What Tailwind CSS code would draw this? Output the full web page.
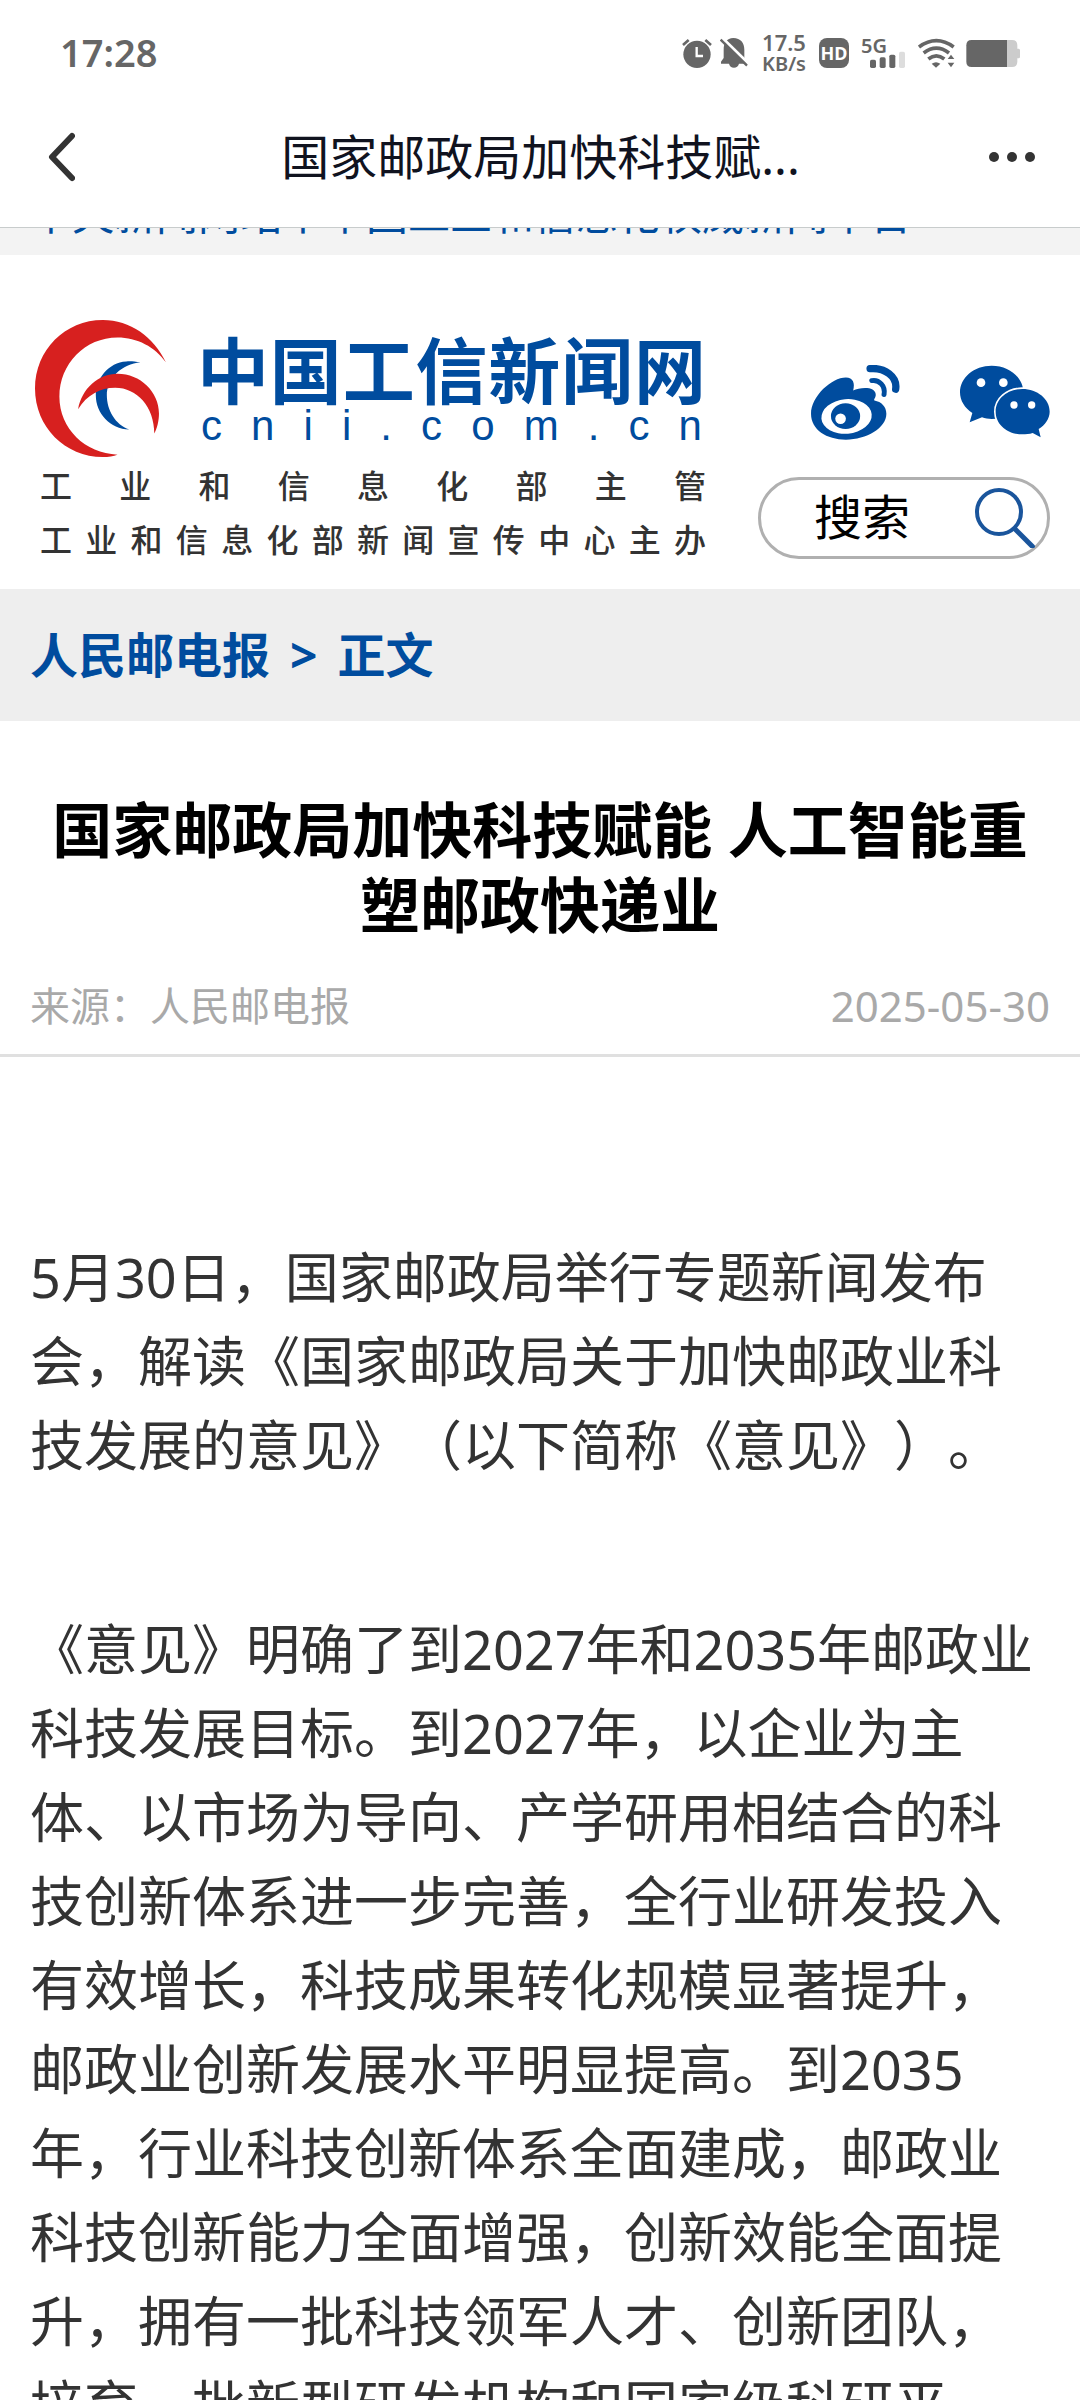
<!DOCTYPE html>
<html lang="zh-CN">
<head>
    <meta charset="UTF-8">
    <meta name="viewport" content="width=device-width, initial-scale=1.0">
    <title>国家邮政局加快科技赋能 人工智能重塑邮政快递业</title>
    <script src="https://cdn.jsdelivr.net/npm/@tailwindcss/browser@4"></script>
</head>
<body class="h-screen overflow-hidden flex flex-col bg-white font-['Noto_Sans','Noto_Sans_CJK_SC',sans-serif] [text-spacing-trim:space-all]">

<!-- Status Bar -->
<div class="shrink-0 flex items-center justify-between h-[104px] pl-[60px] pr-[60px] text-[#666]">
    <span class="text-[38px] leading-[40px] font-semibold">17:28</span>
    <div class="flex items-center pt-[2px]">
        <!-- alarm -->
        <svg class="w-[30px] h-[30px]" viewBox="63 57 90 90" fill="#666">
            <circle cx="108" cy="106" r="41"/>
            <path d="M66 78L83 63M150 78L133 63" stroke="#666" stroke-width="8"/>
            <path d="M107 84V111H126" fill="none" stroke="#fff" stroke-width="7"/>
        </svg>
        <!-- muted bell -->
        <svg class="w-[28px] h-[30px] ml-2" viewBox="179 57 84 90" fill="#666">
            <path d="M219 57C241 57 252 72 252 92V117L259 128V134H236C234 142 228 146 221 146C213 146 208 142 206 134H182V128L190 117V92C190 72 199 57 219 57Z"/>
            <path d="M186 57L266 135" stroke="#fff" stroke-width="9"/>
            <path d="M181 62L260 140" stroke="#666" stroke-width="7"/>
        </svg>
        <div class="ml-[13px] w-[46px] text-center font-semibold">
            <div class="text-[22px] leading-[22px]">17.5</div>
            <div class="text-[20px] leading-[22px]">KB/s</div>
        </div>
        <span class="ml-3 w-[30px] h-[30px] rounded-lg bg-[#666] text-white text-[18px] leading-[30px] font-bold text-center">HD</span>
        <!-- mobile signal -->
        <div class="relative ml-3 w-[44px] h-[30px]">
            <span class="absolute left-0 top-0 text-[20px] leading-[15px] font-semibold">5G</span>
            <svg class="w-[44px] h-[30px]" viewBox="603 57 132 90" fill="#666">
                <rect x="630" y="122" width="18" height="25" rx="5"/>
                <rect x="659" y="115" width="18" height="32" rx="5"/>
                <rect x="688" y="107" width="18" height="40" rx="5"/>
                <rect x="717" y="98" width="18" height="49" rx="5" fill="#ddd"/>
            </svg>
        </div>
        <!-- wifi -->
        <svg class="w-[37px] h-[30px] ml-[13px]" viewBox="774 57 111 90" fill="none" stroke="#666" stroke-width="11">
            <path d="M777 84Q829 46 881 84"/>
            <path d="M791 102Q829 73 867 102"/>
            <path d="M805 120Q829 101 853 120"/>
            <path d="M828 146L815 134Q828 125 841 134Z" fill="#666" stroke="none"/>
            <path d="M873 107L883 120H863ZM873 145L883 131H863Z" fill="#666" stroke="none"/>
        </svg>
        <!-- battery -->
        <svg class="w-[54px] h-[30px] ml-[11px]" viewBox="918 60 162 90">
            <path d="M1040 66H1056Q1072 66 1072 82V92H1076Q1080 92 1080 97V116Q1080 121 1076 121H1072V131Q1072 147 1056 147H1040Z" fill="#ccc"/>
            <path d="M1041 66H935Q919 66 919 82V131Q919 147 935 147H1041Z" fill="#666"/>
        </svg>
    </div>
</div>

<!-- Title Bar -->
<header class="shrink-0 flex items-center justify-between h-[124px] pl-12 pr-[45px] pb-[18px] border-b border-[#c8cccc]">
    <button type="button" aria-label="返回" class="w-[44px]">
        <svg class="w-[27px] h-[50px]" viewBox="0 0 27 50" fill="none" stroke="#333" stroke-width="6" stroke-linecap="round" stroke-linejoin="round">
            <path d="M24 4L4 25L24 46"/>
        </svg>
    </button>
    <h1 class="text-[48px] leading-[60px] text-[#10131f]">国家邮政局加快科技赋...</h1>
    <button type="button" aria-label="更多" class="w-[46px]">
        <svg class="w-[46px] h-[50px]" viewBox="0 0 46 50" fill="#333">
            <circle cx="5" cy="25" r="5"/><circle cx="23" cy="25" r="5"/><circle cx="41" cy="25" r="5"/>
        </svg>
    </button>
</header>

<!-- Page -->
<main class="flex-1 min-h-0 overflow-hidden">
    <!-- Slogan strip, scrolled almost out of view -->
    <div class="flex items-end h-[27px] overflow-hidden px-[30px] pb-5 bg-[#f3f3f3]">
        <p class="text-[42px] leading-[42px] whitespace-nowrap text-[#004c9e]">中央新闻网站丨中国工业和信息化权威新闻平台</p>
    </div>

    <!-- Site header -->
    <div class="flex items-end gap-[52px] px-[30px] pt-[65px] pb-[22px]">
        <div class="flex-1">
            <div class="flex h-[139px]">
                <svg class="shrink-0 w-[132px] h-[137px] ml-[5px]" viewBox="45 60 395 410">
                    <path fill="#d7201f" d="M437 187C400 110 330 60 248 60C135 60 45 150 45 265C45 380 135 470 248 470C265 470 280 468 292 463C195 460 118 385 118 290C118 190 195 112 292 112C350 112 405 140 437 187Z"/>
                    <path fill="#004c9e" d="M361 187C340 183 328 183 318 184C265 187 227 235 227 285C227 340 270 385 327 388C285 372 260 330 260 285C260 235 305 190 361 187Z"/>
                    <path fill="#d7201f" d="M174 327C185 265 235 221 292 221C360 221 416 275 416 340C416 362 410 385 402 400C402 320 350 263 285 263C240 263 200 285 174 327Z"/>
                </svg>
                <div class="flex-1 pl-[30px] pt-[14px] text-[#004c9e]">
                    <div class="text-[72px] leading-[72px] font-bold [text-align-last:justify]">中国工信新闻网</div>
                    <div class="flex justify-between px-1 text-[42px] leading-[40px] font-['Liberation_Sans',sans-serif]">
                        <span>c</span><span>n</span><span>i</span><span>i</span><span>.</span><span>c</span><span>o</span><span>m</span><span>.</span><span>c</span><span>n</span>
                    </div>
                </div>
            </div>
            <div class="pl-[10px] text-[32px] leading-[54px] font-medium text-[#333] [text-align-last:justify]">
                <p>工业和信息化部主管</p>
                <p>工业和信息化部新闻宣传中心主办</p>
            </div>
        </div>

        <div class="w-[292px] mb-2">
            <div class="flex justify-between pl-[53px] mb-[37px]">
                <a href="#" aria-label="微博">
                    <svg class="w-[89px] h-[75px]" viewBox="213 75 268 226" fill="#004c9e">
                        <path d="M213 222C213 170 275 113 318 113C340 113 346 130 340 152C360 142 408 138 408 165C408 175 401 178 404 182C425 186 440 200 440 222C440 265 380 300 318 300C260 300 213 270 213 222Z"/>
                        <ellipse cx="320" cy="230" rx="76" ry="52" fill="#fff" transform="rotate(-5 320 230)"/>
                        <ellipse cx="317" cy="229" rx="44" ry="39"/>
                        <circle cx="302" cy="237" r="16" fill="#fff"/>
                        <path d="M391 86C434 82 474 110 468 148" fill="none" stroke="#004c9e" stroke-width="22" stroke-linecap="round"/>
                        <path d="M396 122C418 118 438 138 433 164" fill="none" stroke="#004c9e" stroke-width="15" stroke-linecap="round"/>
                    </svg>
                </a>
                <a href="#" aria-label="微信">
                    <svg class="w-[90px] h-[75px]" viewBox="660 76 270 225" fill="#004c9e">
                        <path d="M755 78C808 78 850 114 850 158C850 202 808 238 755 238C745 238 735 237 726 233L689 248L697 220C674 205 660 183 660 158C660 114 702 78 755 78Z"/>
                        <path stroke="#fff" stroke-width="10" paint-order="stroke" d="M847 148C892 148 929 178 929 216C929 237 915 256 896 268L902 293L878 280C868 283 858 284 847 284C802 284 767 254 767 216C767 178 802 148 847 148Z"/>
                        <g fill="#fff">
                            <circle cx="723" cy="129" r="13"/><circle cx="790" cy="129" r="13"/>
                            <circle cx="822" cy="196" r="11"/><circle cx="875" cy="196" r="11"/>
                        </g>
                    </svg>
                </a>
            </div>
            <form class="flex items-center h-[82px] pl-[53px] pr-3 border-[3px] border-[#b0b0b0] rounded-full">
                <input type="text" aria-label="搜索" placeholder="搜索" class="flex-1 min-w-0 h-[60px] pb-1 text-[48px] leading-[56px] text-black placeholder:text-black focus:outline-none">
                <button type="submit" aria-label="搜索">
                    <svg class="w-[60px] h-[60px]" viewBox="0 0 60 60" fill="none" stroke="#1a559c" stroke-width="4">
                        <circle cx="24" cy="24" r="22"/>
                        <path d="M39 40L59 60" stroke-width="5"/>
                    </svg>
                </button>
            </form>
        </div>
    </div>

    <!-- Breadcrumb -->
    <nav class="flex items-center gap-5 h-[132px] px-[30px] bg-[#eee] text-[48px] leading-[60px] font-bold text-[#004c9e]">
        <a href="#">人民邮电报</a>
        <span>&gt;</span>
        <a href="#">正文</a>
    </nav>

    <!-- Article -->
    <article>
        <h2 class="px-[30px] pt-[72px] text-[60px] leading-[75px] font-bold text-center text-black">国家邮政局加快科技赋能 人工智能重塑邮政快递业</h2>
        <div class="flex justify-between px-[30px] pt-[35px] pb-5 border-b-[3px] border-[#e0e0e0] leading-[56px] text-[#a9a9a9]">
            <span class="text-[40px]">来源：人民邮电报</span>
            <time datetime="2025-05-30" class="text-[42px]">2025-05-30</time>
        </div>
        <div class="px-[30px] pt-[178px] space-y-[120px] text-[54px] leading-[84px] text-[#333]">
            <p>5月30日，国家邮政局举行专题新闻发布会，解读《国家邮政局关于加快邮政业科技发展的意见》（以下简称《意见》）。</p>
            <p>《意见》明确了到2027年和2035年邮政业科技发展目标。到2027年，以企业为主体、以市场为导向、产学研用相结合的科技创新体系进一步完善，全行业研发投入有效增长，科技成果转化规模显著提升，邮政业创新发展水平明显提高。到2035年，行业科技创新体系全面建成，邮政业科技创新能力全面增强，创新效能全面提升，拥有一批科技领军人才、创新团队，培育一批新型研发机构和国家级科研平台，</p>
        </div>
    </article>
</main>

</body>
</html>
